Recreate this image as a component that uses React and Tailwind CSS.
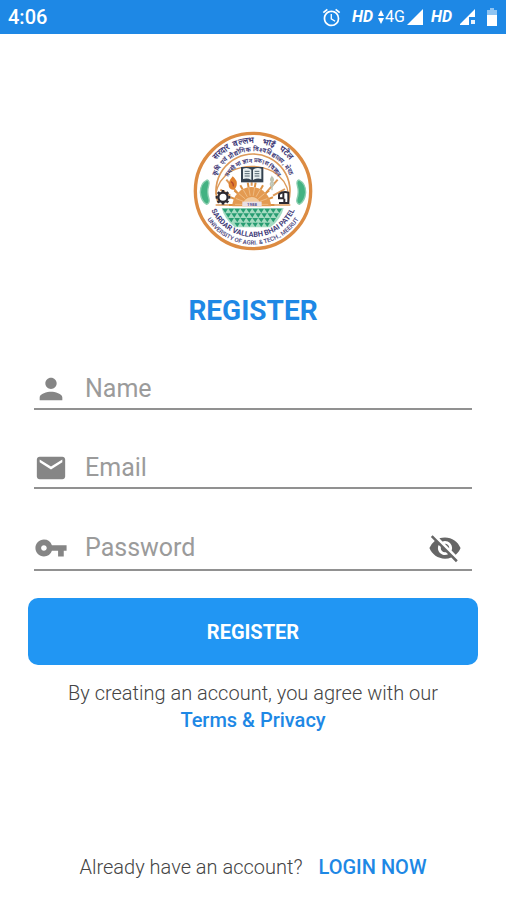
import React, { useState } from "react"
import {
  MdAlarm,
  MdEmail,
  MdPerson,
  MdVisibility,
  MdVisibilityOff,
  MdVpnKey,
} from "react-icons/md"

function StatusBar() {
  return (
    <header className="flex h-[34px] items-center justify-between bg-[#1e88e5] px-2 text-white">
      <span className="text-xl font-medium">4:06</span>
      <div className="flex items-center">
        <MdAlarm size={21} className="mr-2.5" />
        <span className="mr-1 text-base font-bold italic">HD</span>
        <svg viewBox="0 0 8 16" className="h-4 w-2" fill="currentColor">
          <path d="M4 1 7 7H1zM4 15 1 9h6z" />
        </svg>
        <span className="mr-0.5 text-base">4G</span>
        <svg viewBox="0 0 16 16" className="mr-2 size-4" fill="currentColor">
          <path d="M16 0v16H0z" />
        </svg>
        <span className="mr-2 text-base font-bold italic">HD</span>
        <svg viewBox="0 0 16 16" className="mr-2.5 size-4" fill="currentColor">
          <path d="M15 0v8H9v8H0v-1z" />
          <path d="M11 11h4v4h-4z" opacity=".9" />
        </svg>
        <svg viewBox="0 0 12 18" className="h-[18px] w-3" fill="currentColor">
          <path opacity=".5" d="M4 0h4v2h3v5H1V2h3z" />
          <path d="M1 7h10v11H1z" />
        </svg>
      </div>
    </header>
  )
}

const RAYS = [0, 20, 40, 60, 80, 100, 120, 140, 160, 180]
const TEETH = [0, 45, 90, 135, 180, 225, 270, 315]
const FIELD_ROWS = [
  { y: 233, from: 88, count: 10 },
  { y: 247, from: 97, count: 9 },
  { y: 261, from: 106, count: 8 },
  { y: 275, from: 124, count: 6 },
]
const TOP_WORDS = [
  { word: "सरदार", offset: "28%" },
  { word: "वल्लभ", offset: "44%" },
  { word: "भाई", offset: "60%" },
  { word: "पटेल", offset: "73%" },
]

function UniversityLogo() {
  return (
    <svg viewBox="0 0 360 360" className="size-[120px]" role="img" aria-label="University logo">
      <defs>
        <path id="arc-top" d="M36 180a144 144 0 0 1 288 0" />
        <path id="arc-mid" d="M61 180a119 119 0 0 1 238 0" />
        <path id="arc-inner" d="M94 180a86 86 0 0 1 172 0" />
        <path id="arc-name" d="M42 180a138 138 0 0 0 276 0" />
        <path id="arc-bottom" d="M19 180a161 161 0 0 0 322 0" />
      </defs>
      <circle cx="180" cy="180" r="173" fill="#fff" stroke="#dc8b42" strokeWidth="10" />

      {/* Dome and its panels */}
      <g fill="none" stroke="#dc9a5a">
        <path d="M75 216a111 111 0 1 1 210 0" strokeWidth="5" />
        <path d="M68 190q8-45 45-69 63-30 126 0 42 25 48 69" strokeWidth="4" />
        <path d="M68 222h224" strokeWidth="5" />
        <path d="M132 184 100 146M220 184l34-38M112 194l-30-18M240 194l36-20M176 164v-10" strokeWidth="6" />
      </g>

      {/* Sun */}
      <g stroke="#dc9142" strokeWidth="6">
        {RAYS.map((a) => (
          <path key={a} d="M122 222H108" transform={`rotate(${a} 176 222)`} />
        ))}
      </g>
      <path d="M118 226a58 58 0 0 1 116 0z" fill="#e39a51" />
      <g stroke="#f3c894" strokeWidth="2">
        {RAYS.map((a) => (
          <path key={a} d="M150 220h-24" transform={`rotate(${a} 176 220)`} />
        ))}
      </g>
      <path d="M148 226a28 28 0 0 1 56 0z" fill="#f2ca9c" />
      <rect x="148" y="212" width="58" height="14" fill="#e7dfe5" />
      <text x="177" y="224" textAnchor="middle" fontSize="13" fontWeight="700" fill="#57518b">
        1988
      </text>

      {/* Book */}
      <rect x="144" y="108" width="67" height="46" fill="#344250" />
      <path d="M150 113q14-5 25 3v31q-11-7-25-3zM205 113q-14-5-25 3v31q11-7 25-3z" fill="#e8eff0" />
      <path d="M155 121h15M155 128h15M155 135h15M185 121h14M185 128h14M185 135h14" stroke="#526570" strokeWidth="3" />

      {/* Flame and wheat */}
      <path d="M119 136q15 12 12 27-3 13-13 13-12-3-11-17 2-13 12-23z" fill="#df802e" />
      <path d="M114 152q8 4 7 14" fill="none" stroke="#b4492d" strokeWidth="4" />
      <path d="M237 178v-40q8 8 1 14 8 7 0 14M237 138q-8 8-1 14-8 7 0 14" fill="none" stroke="#bdc3b3" strokeWidth="4" />

      {/* Gear */}
      <g stroke="#2c2931">
        <circle cx="90" cy="199" r="14" fill="#fff" strokeWidth="7" />
        {TEETH.map((a) => (
          <path key={a} d="M90 183v-6" strokeWidth="8" transform={`rotate(${a} 90 199)`} />
        ))}
      </g>

      {/* Microscope */}
      <g fill="none" stroke="#2c2931" strokeWidth="6">
        <path d="M257 190q14-10 29-5v31h-28M258 190v12h16M271 183v16M274 203v12" />
      </g>

      {/* Field */}
      <path d="M86 231h186q-8 34-40 58h-106q-32-24-40-58z" fill="#a6dbc2" />
      <g fill="#279d72">
        {FIELD_ROWS.map((row) =>
          Array.from({ length: row.count }, (_, i) => (
            <path key={`${row.y}-${i}`} d={`M${row.from + i * 18} ${row.y}h17l-8 13z`} />
          ))
        )}
      </g>

      {/* Side leaves */}
      <g fill="#43b282" stroke="#8bceb0" strokeWidth="4">
        <path d="M42 147q-20 10-20 37 2 27 19 36 10-4 7-16-7-20-1-40 4-14-5-17z" />
        <path d="M318 147q20 10 20 37-2 27-19 36-10-4-7-16 7-20 1-40-4-14 5-17z" />
      </g>

      <g fill="#3f3b78" fontWeight="700" textAnchor="middle">
        {TOP_WORDS.map(({ word, offset }) => (
          <text key={word} fontSize="25">
            <textPath href="#arc-top" startOffset={offset}>{word}</textPath>
          </text>
        ))}
        <text fontSize="19">
          <textPath href="#arc-mid" startOffset="50%">कृषि एवं प्रौद्योगिक विश्वविद्यालय, मेरठ</textPath>
        </text>
        <text fontSize="18">
          <textPath href="#arc-inner" startOffset="50%">तमसोमा ज्ञान प्रकाश विज्ञान</textPath>
        </text>
        <text fontSize="22">
          <textPath href="#arc-name" startOffset="50%">SARDAR VALLABH BHAI PATEL</textPath>
        </text>
        <text fontSize="18" fontWeight="500">
          <textPath href="#arc-bottom" startOffset="50%">UNIVERSITY OF AGRI. &amp; TECH., MEERUT</textPath>
        </text>
      </g>
    </svg>
  )
}

function Field({ icon: Icon, label, children, ...inputProps }) {
  return (
    <div className="flex min-h-[41px] items-center border-b-2 border-[#919191]">
      <Icon size={34} className="shrink-0 text-[#858585]" />
      <input
        aria-label={label}
        placeholder={label}
        className="ml-[17px] min-w-0 flex-1 bg-transparent text-[25px] leading-8 text-[#555555] outline-none placeholder:text-[#9b9b9b]"
        {...inputProps}
      />
      {children}
    </div>
  )
}

export default function App() {
  const [form, setForm] = useState({ name: "", email: "", password: "" })
  const [showPassword, setShowPassword] = useState(false)

  const handleChange = (e) =>
    setForm((prev) => ({ ...prev, [e.target.name]: e.target.value }))

  return (
    <div className="flex min-h-screen flex-col bg-white font-['Roboto',sans-serif]">
      <StatusBar />

      <main className="flex flex-1 flex-col px-7 pt-[97px] pb-[19px]">
        <div className="flex justify-center">
          <UniversityLogo />
        </div>

        <h1 className="mt-11 text-center text-[28px] leading-8 font-bold text-[#1e88e5]">
          REGISTER
        </h1>

        <form className="mt-[42px]" onSubmit={(e) => e.preventDefault()}>
          <div className="flex flex-col gap-[38px] px-1.5">
            <Field icon={MdPerson} label="Name" name="name" value={form.name} onChange={handleChange} />
            <Field
              icon={MdEmail}
              label="Email"
              name="email"
              type="email"
              value={form.email}
              onChange={handleChange}
            />
            <Field
              icon={MdVpnKey}
              label="Password"
              name="password"
              type={showPassword ? "text" : "password"}
              value={form.password}
              onChange={handleChange}
            >
              <button
                type="button"
                aria-label="Toggle password visibility"
                className="mr-1.5 cursor-pointer p-1 text-[#666666]"
                onClick={() => setShowPassword((s) => !s)}
              >
                {showPassword ? <MdVisibility size={34} /> : <MdVisibilityOff size={34} />}
              </button>
            </Field>
          </div>

          <button
            type="submit"
            className="mt-[27px] h-[67px] w-full cursor-pointer rounded-[10px] bg-[#2196f3] text-xl font-bold text-white"
          >
            REGISTER
          </button>
        </form>

        <p className="mt-[15px] text-center text-xl leading-[27px] font-light text-[#444444]">
          By creating an account, you agree with our
          <br />
          <a href="#terms" className="font-medium text-[#1e88e5]">
            Terms &amp; Privacy
          </a>
        </p>

        <p className="mt-auto flex justify-center gap-4 text-xl leading-[27px] font-light text-[#444444]">
          Already have an account?
          <a href="#login" className="font-medium text-[#1e88e5]">
            LOGIN NOW
          </a>
        </p>
      </main>
    </div>
  )
}
